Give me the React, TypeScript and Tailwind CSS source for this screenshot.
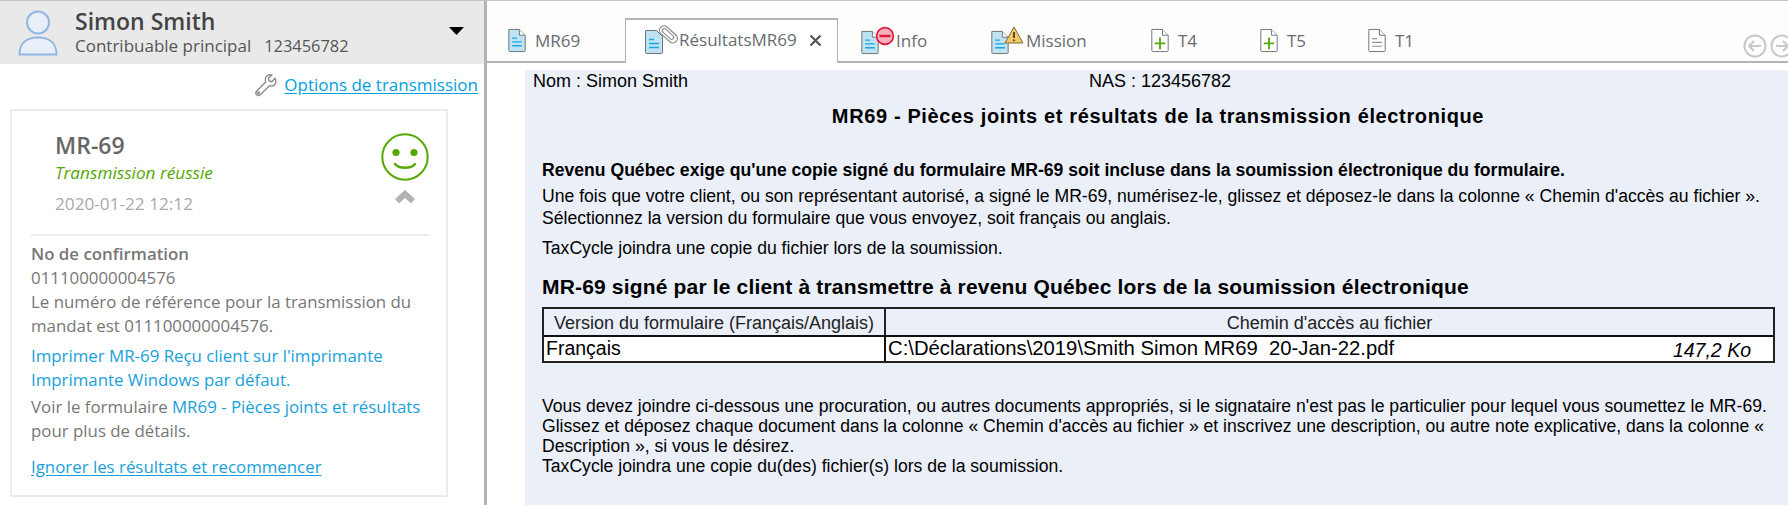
import React from "react";

const sans = "font-['Open_Sans','Noto_Sans',sans-serif]";
const arial = "font-['Liberation_Sans',Arial,sans-serif]";

function Doc({ fill = "#bfe3f3", line = "#1aa7e0", stroke = "#6d7478" }: { fill?: string; line?: string; stroke?: string }) {
  return (
    <svg width="20" height="25" viewBox="0 0 20 26" className="shrink-0">
      <path d="M1.5 1.5 H12.5 L18.5 7.5 V23.5 a1 1 0 0 1 -1 1 H2.5 a1 1 0 0 1 -1 -1 Z" fill={fill} stroke={stroke} strokeWidth="1" />
      <path d="M12.5 1.5 V7.5 H18.5" fill="#fff" stroke={stroke} strokeWidth="1" />
      <path d="M5 10.5 H10 M5 14.5 H15 M5 18.5 H15" stroke={line} strokeWidth="1.4" />
    </svg>
  );
}

function PlusDoc() {
  return (
    <svg width="20" height="25" viewBox="0 0 20 26" className="shrink-0">
      <path d="M1.5 1.5 H12.5 L18.5 7.5 V23.5 a1 1 0 0 1 -1 1 H2.5 a1 1 0 0 1 -1 -1 Z" fill="#fff" stroke="#6d7478" />
      <path d="M12.5 1.5 V7.5 H18.5" fill="#fff" stroke="#6d7478" />
      <path d="M10 10 V22 M4.5 16 H15.5" stroke="#58ab0c" strokeWidth="2" />
    </svg>
  );
}

function PlainDoc() {
  return (
    <svg width="20" height="25" viewBox="0 0 20 26" className="shrink-0">
      <path d="M1.5 1.5 H12.5 L18.5 7.5 V23.5 a1 1 0 0 1 -1 1 H2.5 a1 1 0 0 1 -1 -1 Z" fill="#fff" stroke="#6d7478" />
      <path d="M12.5 1.5 V7.5 H18.5" fill="#fff" stroke="#6d7478" />
      <path d="M5 11 H10 M5 15 H15 M5 19 H15" stroke="#8a8f92" strokeWidth="1.2" />
    </svg>
  );
}

function Tab({ icon, label, w, gap = "gap-2" }: { icon: React.ReactNode; label: string; w: string; gap?: string }) {
  return (
    <div className={`flex items-center ${gap} ${w} h-[40px] pb-[3px] shrink-0`}>
      {icon}
      <span className={`text-[17px] text-[#666c72] ${sans}`}>{label}</span>
    </div>
  );
}

function Sidebar() {
  return (
    <aside className={`w-[484px] shrink-0 flex flex-col ${sans} text-[#777]`}>
      <div className="h-[63px] bg-[#e9e9e9] flex items-center pl-[18px] pr-[19px] shrink-0">
        <svg width="40" height="46" viewBox="0 0 40 46" className="shrink-0">
          <circle cx="20" cy="12.5" r="11" fill="#e8eff9" stroke="#92b6e2" strokeWidth="2" />
          <path d="M1.5 44.5 C1.5 32 10 27.5 20 27.5 C30 27.5 38.5 32 38.5 44.5 Z" fill="#e8eff9" stroke="#92b6e2" strokeWidth="2" />
        </svg>
        <div className="ml-[17px] flex-1 mt-[-2px]">
          <div className="text-[23px] leading-[28px] font-semibold text-[#444]">Simon Smith</div>
          <div className="text-[17px] leading-[22px] text-[#555] flex">
            <span>Contribuable principal</span>
            <span className="ml-[13px] text-[16.4px]">123456782</span>
          </div>
        </div>
        <svg width="16" height="10" viewBox="0 0 16 10" className="shrink-0 mt-[-4px]"><path d="M0 1 H15 L7.5 9 Z" fill="#000" /></svg>
      </div>
      <div className="flex items-center justify-end h-[45px] pr-[6px] pb-[3px] gap-[7px]">
        <svg width="23" height="23" viewBox="0 0 24 24" fill="#fff" stroke="#8a8a8a" strokeWidth="1.4">
          <path d="M22 4.5 18.5 8 15.7 7.2 15 4.4 18.5 1C15 0 11.5 2.3 11.8 6.4c.1.8.2 1.3.4 1.9L2.6 18a2.7 2.7 0 0 0 3.8 3.8l9.7-9.6c.6.2 1.1.3 1.9.4C21.7 12.7 24 9 22 4.5Z" />
          <circle cx="4.7" cy="19.7" r="1" />
        </svg>
        <a className="text-[17px] text-[#00a0e0] underline underline-offset-2">Options de transmission</a>
      </div>
      <div className="ml-[10px] w-[438px] h-[388px] border-2 border-[#ececec] bg-white pl-[19px] pr-[17px] pt-[17px] flex flex-col">
        <div className="flex pl-[24px] h-[108px] border-b-2 border-[#ececec]">
          <div className="flex-1">
            <div className="text-[23px] leading-[34px] font-semibold text-[#666]">MR-69</div>
            <div className="text-[17.2px] leading-[24px] italic text-[#55a800] mt-[-1px]">Transmission réussie</div>
            <div className="text-[17.2px] leading-[24px] text-[#aaa] mt-[7px]">2020-01-22 12:12</div>
          </div>
          <div className="flex flex-col items-center w-[48px] mt-[5px]">
            <svg width="48" height="48" viewBox="0 0 48 48">
              <circle cx="24" cy="24" r="22.7" fill="#fff" stroke="#55a800" strokeWidth="2" />
              <circle cx="15" cy="19.5" r="3.6" fill="#55a800" />
              <circle cx="33" cy="19.5" r="3.6" fill="#55a800" />
              <path d="M14 31 C18 36 30 36 34 31" fill="none" stroke="#55a800" strokeWidth="2.4" strokeLinecap="round" />
            </svg>
            <svg width="22" height="16" viewBox="0 0 22 16" className="mt-[8px]"><path d="M11 1 L21 10 L17 14.5 L11 9 L5 14.5 L1 10 Z" fill="#b3b3b3" /></svg>
          </div>
        </div>
        <div className="text-[16.85px] leading-[24px] pt-[6px]">
          <div className="font-semibold">No de confirmation</div>
          <div>011100000004576</div>
          <div>Le numéro de référence pour la transmission du mandat est 011100000004576.</div>
          <div className="mt-[6px] text-[#18a0dc]">Imprimer MR-69 Reçu client sur l'imprimante Imprimante Windows par défaut.</div>
          <div className="mt-[3px]">Voir le formulaire <span className="text-[#18a0dc]">MR69 - Pièces joints et résultats</span> pour plus de détails.</div>
          <a className="block mt-[12px] text-[#18a0dc] underline underline-offset-2">Ignorer les résultats et recommencer</a>
        </div>
      </div>
    </aside>
  );
}

function Tabs() {
  return (
    <div className="h-[62px] shrink-0 bg-[#fdfdfb] border-b-[2px] border-[#b4b4b4] flex items-end pl-[20px] relative overflow-visible">
      <div className="flex items-center h-[42px] mb-[-2px]">
        <Tab w="w-[118px]" icon={<Doc />} label="MR69" />
        <div className="flex items-center w-[213px] h-[45px] mt-[-3px] shrink-0 bg-white border-x-[1px] border-t-[2px] border-[#b4b4b4] pl-[18px] pr-[9px] pb-[3px]">
          <svg width="35" height="30" viewBox="0 0 35 30" className="shrink-0">
            <path d="M1.5 5.5 H12.5 L18.5 11.5 V27.5 a1 1 0 0 1 -1 1 H2.5 a1 1 0 0 1 -1 -1 Z" fill="#bfe3f3" stroke="#6d7478" />
            <path d="M5 14.5 H10 M5 18.5 H15 M5 22.5 H15" stroke="#1aa7e0" strokeWidth="1.4" />
            <g transform="rotate(42 24 9)" fill="none" stroke="#8d8d8d" strokeWidth="1.2">
              <rect x="14" y="4.5" width="21" height="9" rx="4.5" />
              <rect x="17" y="7" width="14" height="4" rx="2" />
            </g>
          </svg>
          <span className={`text-[17px] text-[#666c72] ${sans}`}>RésultatsMR69</span>
          <svg width="13" height="13" viewBox="0 0 13 13" className="ml-auto mr-[6px]"><path d="M1.5 1.5 L11.5 11.5 M11.5 1.5 L1.5 11.5" stroke="#555" strokeWidth="2.2" /></svg>
        </div>
        <div className="flex items-center w-[152px] h-[40px] shrink-0 pl-[22px] pb-[3px]">
          <span className="relative w-[36px] h-[30px] shrink-0">
            <span className="absolute left-0 top-[4px]"><Doc /></span>
            <svg width="20" height="20" viewBox="0 0 20 20" className="absolute left-[15px] top-0">
              <circle cx="10" cy="10" r="8.4" fill="#f6b1bd" stroke="#e0153c" strokeWidth="1.6" />
              <path d="M4.5 10 H15.5" stroke="#e0153c" strokeWidth="2.4" />
            </svg>
          </span>
          <span className={`text-[17px] text-[#666c72] ${sans}`}>Info</span>
        </div>
        <div className="flex items-center w-[160px] h-[40px] shrink-0 pb-[3px]">
          <span className="relative w-[36px] h-[30px] shrink-0">
            <span className="absolute left-0 top-[4px]"><Doc /></span>
            <svg width="20" height="18" viewBox="0 0 20 18" className="absolute left-[14px] top-[0px]">
              <path d="M10 1 L19 17 H1 Z" fill="#f6c667" stroke="#7d6a3a" strokeWidth="1" />
              <path d="M10 6 V12 M10 13.5 V15.2" stroke="#333" strokeWidth="1.6" />
            </svg>
          </span>
          <span className={`text-[17px] text-[#666c72] ${sans}`}>Mission</span>
        </div>
        <Tab w="w-[109px]" icon={<PlusDoc />} label="T4" />
        <Tab w="w-[108px]" icon={<PlusDoc />} label="T5" />
        <Tab w="w-[80px]" icon={<PlainDoc />} label="T1" />
      </div>
      <div className="absolute right-[-6px] bottom-[3px] flex gap-[3px]">
        {[0, 1].map((i) => (
          <svg key={i} width="24" height="24" viewBox="0 0 24 24" fill="none" stroke="#c8c8c8" strokeWidth="2">
            <circle cx="12" cy="12" r="10.5" />
            {i === 0 ? <path d="M18 12 H6 M11 7 L6 12 L11 17" /> : <path d="M6 12 H18 M13 7 L18 12 L13 17" />}
          </svg>
        ))}
      </div>
    </div>
  );
}

function Form() {
  return (
    <div className="pl-[38px] pt-[7px] flex-1 min-h-0 overflow-hidden">
      <div className={`bg-[#eaeff8] h-full ${arial} text-black text-[17.6px] pl-[17px] pr-[4px]`}>
        <div className="flex h-[22px] leading-[22px] ml-[-9px] text-[18px]">
          <span className="w-[556px]">Nom : Simon Smith</span>
          <span>NAS : 123456782</span>
        </div>
        <h1 className="text-center text-[20px] font-bold tracking-[0.63px] mt-[13px] leading-[22px] pr-[10px]">MR69 - Pièces joints et résultats de la transmission électronique</h1>
        <p className="font-bold leading-[20px] mt-[33px]">Revenu Québec exige qu'une copie signé du formulaire MR-69 soit incluse dans la soumission électronique du formulaire.</p>
        <p className="leading-[21.5px] mt-[6px] whitespace-pre-line">{"Une fois que votre client, ou son représentant autorisé, a signé le MR-69, numérisez-le, glissez et déposez-le dans la colonne « Chemin d'accès au fichier ».\nSélectionnez la version du formulaire que vous envoyez, soit français ou anglais."}</p>
        <p className="leading-[20px] mt-[9px]">TaxCycle joindra une copie du fichier lors de la soumission.</p>
        <h2 className="text-[21px] font-bold tracking-[0.17px] leading-[24px] mt-[17px]">MR-69 signé par le client à transmettre à revenu Québec lors de la soumission électronique</h2>
        <div className="mt-[8px] mr-[9px] border-2 border-[#222] grid grid-cols-[342px_1fr]">
          <div className="h-[26px] border-r-2 border-[#222] text-center leading-[29px] text-[18px] text-[#222]">Version du formulaire (Français/Anglais)</div>
          <div className="h-[26px] text-center leading-[29px] text-[18px] text-[#222]">Chemin d'accès au fichier</div>
          <div className="h-[26px] bg-white border-t-2 border-r-2 border-[#111] pl-[2px] leading-[22px] text-[19.5px]">Français</div>
          <div className="h-[26px] bg-white border-t-2 border-[#111] pl-[2px] pr-[22px] leading-[22px] flex justify-between text-[20.3px]">
            <span className="whitespace-pre">C:\Déclarations\2019\Smith Simon MR69  20-Jan-22.pdf</span>
            <span className="italic text-[19.5px] mt-[2px]">147,2 Ko</span>
          </div>
        </div>
        <p className="leading-[20px] mt-[33px] whitespace-pre-line">{"Vous devez joindre ci-dessous une procuration, ou autres documents appropriés, si le signataire n'est pas le particulier pour lequel vous soumettez le MR-69.\nGlissez et déposez chaque document dans la colonne « Chemin d'accès au fichier » et inscrivez une description, ou autre note explicative, dans la colonne «\nDescription », si vous le désirez.\nTaxCycle joindra une copie du(des) fichier(s) lors de la soumission."}</p>
      </div>
    </div>
  );
}

export default function App() {
  return (
    <div className="w-[1788px] h-[505px] overflow-hidden bg-white flex border-t border-[#c4c4c4]">
      <Sidebar />
      <div className="w-[3px] bg-[#b4b4b4] shrink-0" />
      <main className="flex-1 min-w-0 flex flex-col">
        <Tabs />
        <Form />
      </main>
    </div>
  );
}
